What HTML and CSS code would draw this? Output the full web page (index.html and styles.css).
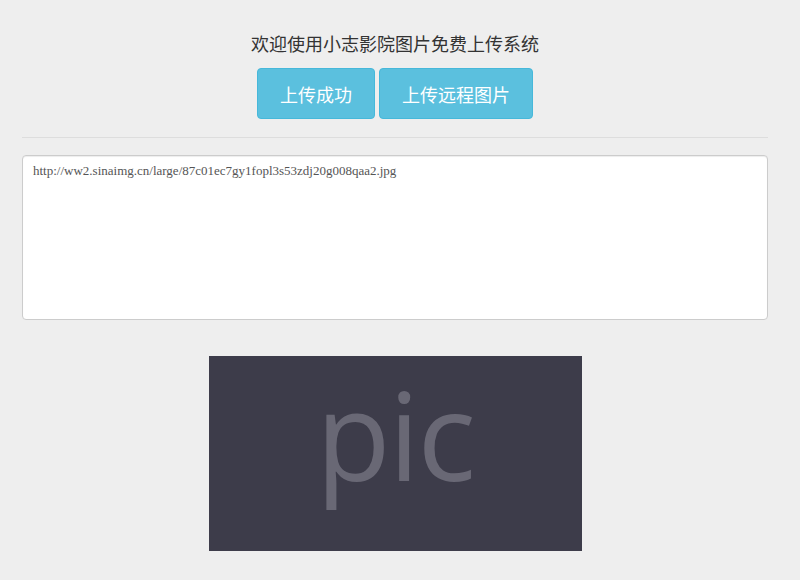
FILE: index.html
```html
<!DOCTYPE html>
<html lang="zh-CN">
<head>
<meta charset="utf-8">
<title>小志影院图片免费上传系统</title>
<link rel="stylesheet" href="styles.css">
</head>
<body>
<div class="page">
  <h1 class="title">欢迎使用小志影院图片免费上传系统</h1>
  <div class="actions">
    <button class="btn">上传成功</button>
    <button class="btn">上传远程图片</button>
  </div>
  <hr class="rule">
  <textarea class="urls" readonly>http://ww2.sinaimg.cn/large/87c01ec7gy1fopl3s53zdj20g008qaa2.jpg</textarea>
  <div class="preview">
    <div class="pic"><span class="pic-label">pic</span></div>
  </div>
</div>
</body>
</html>
```
FILE: styles.css
```css
html, body {
  margin: 0;
  padding: 0;
  background: #eeeeee;
}
.page {
  padding: 33px 32px 0 22px;
  font-family: "Noto Sans CJK SC", sans-serif;
}
.title {
  margin: 0;
  font-size: 18px;
  line-height: 20px;
  font-weight: normal;
  color: #333333;
  text-align: center;
}
.actions {
  margin-top: 15px;
  display: flex;
  justify-content: center;
  gap: 4px;
}
.btn {
  height: 51px;
  padding: 0 22px;
  border: 1px solid #46b8da;
  border-radius: 4px;
  background: #5bc0de;
  color: #ffffff;
  font-family: "Noto Sans CJK SC", sans-serif;
  font-size: 18px;
  line-height: 20px;
}
.rule {
  margin: 18px 0 0;
  border: 0;
  border-top: 1px solid #dddddd;
  height: 0;
}
.urls {
  display: block;
  box-sizing: border-box;
  width: 100%;
  height: 165px;
  margin-top: 17px;
  padding: 6px 10px;
  border: 1px solid #cccccc;
  border-radius: 4px;
  box-shadow: inset 0 1px 1px rgba(0, 0, 0, 0.075);
  background: #ffffff;
  color: #555555;
  font-family: "Liberation Serif", serif;
  font-size: 13px;
  line-height: 18px;
  resize: none;
  outline: none;
}
.preview {
  margin-top: 36px;
  display: flex;
  justify-content: center;
}
.pic {
  box-sizing: border-box;
  width: 373px;
  height: 195px;
  padding-bottom: 40px;
  display: flex;
  align-items: center;
  justify-content: center;
  background: #3d3c4a;
}
.pic-label {
  color: #696875;
  font-family: "Open Sans", sans-serif;
  font-size: 122px;
  line-height: 150px;
  letter-spacing: -2px;
}
```
